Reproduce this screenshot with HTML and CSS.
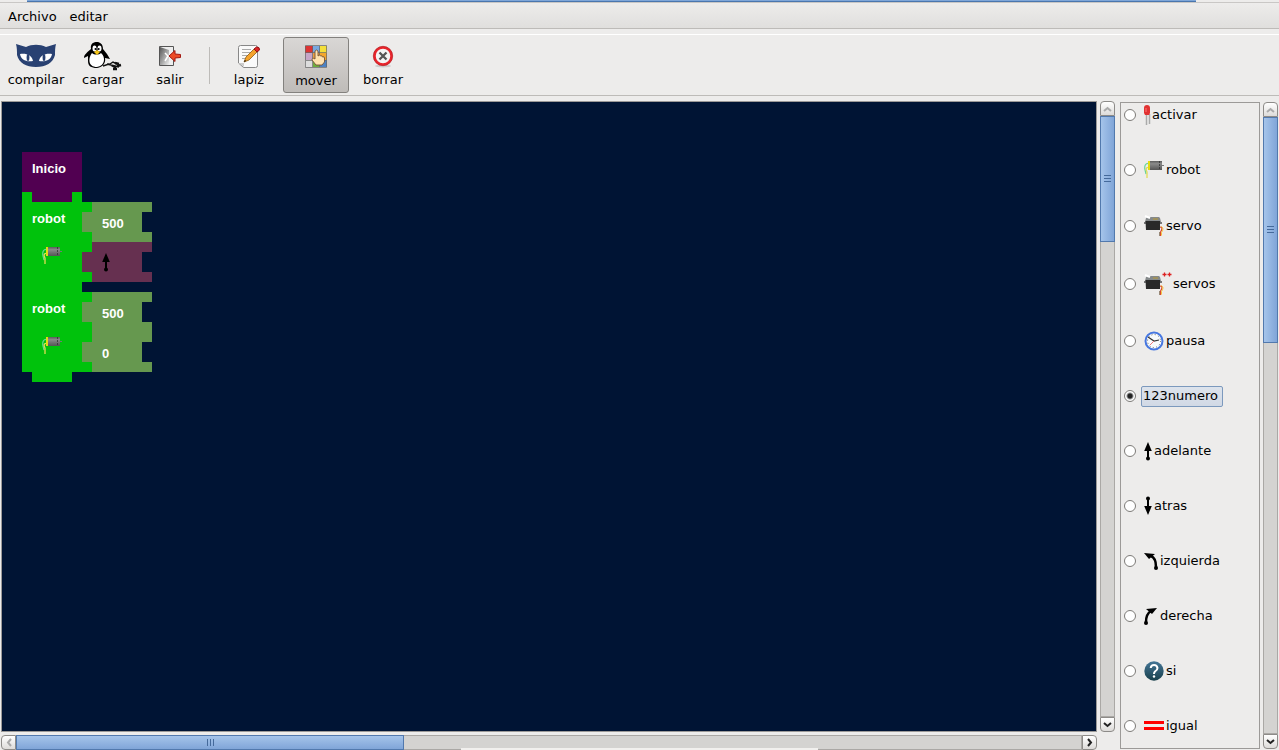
FILE: index.html
```
<!DOCTYPE html>
<html lang="es">
<head>
<meta charset="utf-8">
<title>Editor de bloques</title>
<link rel="stylesheet" href="styles.css">
</head>
<body>
<svg class="defs" aria-hidden="true">
  <defs>
    <linearGradient id="metal" x1="0" y1="0" x2="0" y2="1"><stop offset="0" stop-color="#5c5c5c"/><stop offset=".3" stop-color="#8a8a8a"/><stop offset="1" stop-color="#555"/></linearGradient>
    <linearGradient id="teal" x1="0" y1="0" x2="0" y2="1"><stop offset="0" stop-color="#447596"/><stop offset="1" stop-color="#19404c"/></linearGradient>
    <linearGradient id="door" x1="0" y1="0" x2="1" y2="1"><stop offset="0" stop-color="#555"/><stop offset="1" stop-color="#eee"/></linearGradient>
    <symbol id="motor" viewBox="0 0 20 20">
      <path d="M5 3.500C1 3 .5 6 .8 9L2 14" fill="none" stroke="#68d49a" stroke-width="1.200"/>
      <path d="M5 7.500C1 7 2 10 3 12V18" fill="none" stroke="#e2dc55" stroke-width="1.300"/>
      <rect x="5" y="1" width="13" height="9" fill="url(#metal)"/>
      <rect x="4" y="1" width="2" height="9" fill="#e4dc10"/>
      <path d="M15.500 1V10" stroke="#333" stroke-width=".8" stroke-dasharray="2 1"/>
      <path d="M18 5.500h2" stroke="#777"/>
    </symbol>
    <symbol id="servo" viewBox="0 0 20 22">
      <path d="M2 3l1-1 4 0 2 0 6 0 1 1 1 4H1z" fill="#85898a"/>
      <path d="M1 1l5 2" stroke="#fff" stroke-width="2"/>
      <path d="M9 4h5" stroke="#a9954e" stroke-width="1.500"/>
      <path d="M0 7h18v2H0z" fill="#777"/>
      <path d="M1.500 6h14.500v9H2z" fill="#292929"/>
      <path d="M16 12c3 0 2 3 .5 5v4" fill="none" stroke="#d9492e" stroke-width="1.200"/>
      <path d="M17 11.500c3 1 2 4 .5 6v3" fill="none" stroke="#f3c841" stroke-width="1"/>
      <path d="M15.500 17v4" stroke="#987" stroke-width="1"/>
    </symbol>
    <symbol id="arrow" viewBox="0 0 8 20">
      <path d="M4 1L7.800 10H.2z"/><path d="M3 8h2v9H3z"/><circle cx="4" cy="17.500" r="2"/>
    </symbol>
  </defs>
</svg>
<div class="window-edge"></div>
<nav class="menubar">
  <button class="menu">Archivo</button>
  <button class="menu">editar</button>
</nav>
<div class="toolbar">
  <button class="tool">
    <svg width="40" height="26" viewBox="0 0 40 26"><path d="M0 1L10 4C16 1 24 1 30 4L40 1C39 5 39 8 39 12C37 20 30 24 20 24S3 20 1 12C1 8 1 5 0 1Z" fill="#294172"/><path d="M4 11C10 10 16 12 17 18C10 19 5 17 4 11ZM36 11C30 10 24 12 23 18C30 19 35 17 36 11Z" fill="#fff"/><ellipse cx="12" cy="14.500" rx="1.400" ry="3.500" fill="#294172"/><ellipse cx="28" cy="14.500" rx="1.400" ry="3.500" fill="#294172"/></svg>
    <span>compilar</span>
  </button>
  <button class="tool">
    <svg width="40" height="30" viewBox="0 0 40 30"><path d="M8 8C7 2 11 1 14 1S20 3 20 8L24 13 27 18 22 17C23 22 20 26 14 27C8 27 5 25 5 20V15L1 17C1 13 5 11 8 8Z"/><path d="M9 12C11 14 16 14 18 12C23 16 22 25 14 26C5 26 5 17 9 12Z" fill="#fff"/><ellipse cx="11.500" cy="7.500" rx="2" ry="3" fill="#fff"/><ellipse cx="16.500" cy="7.500" rx="2" ry="3" fill="#fff"/><circle cx="12.500" cy="8" r="1"/><circle cx="15.700" cy="8" r="1"/><path d="M11 11L14 9l3 2-3 3z" fill="#f5c518"/><path d="M20 25L26 23 33 27M24 23L36 26M27 23L30 21 34 23" fill="none" stroke="#111" stroke-width="1.500"/><path d="M32 22l4 1M34 25l4-1M30 28l4 0" stroke="#111" stroke-width="2.500"/></svg>
    <span>cargar</span>
  </button>
  <button class="tool">
    <svg width="24" height="24" viewBox="0 0 24 24"><path d="M1.500 2.500h14v19h-14z" fill="#eee" stroke="#555"/><path d="M2 3L11 6V21H2z" fill="url(#door)"/><path d="M7 9l3 3-3 5" fill="none" stroke="#fff" stroke-width="1.500"/><path d="M11 12L17 6.500V10L22.500 10.500V13.500L17 14V17.500Z" fill="#ed4b26" stroke="#a31912"/></svg>
    <span>salir</span>
  </button>
  <div class="separator"></div>
  <button class="tool">
    <svg width="24" height="26" viewBox="0 0 24 26"><path d="M1.500 4.500Q1.500 2.500 3.500 2.500H18.500Q20.500 2.500 20.500 4.500V22.500Q20.500 24.500 18.500 24.500H6.500L1.500 20Z" fill="#fafafa" stroke="#888"/><path d="M5 6.500h9M5 9.500h9M5 12.500h7M5 15.500h4" stroke="#aaa"/><path d="M2 20l5 4V20z" fill="#ccc"/><path d="M7 19L9 14 17 6 20 9 12 17Z" fill="#f5a32d" stroke="#8c5d16" stroke-width=".8"/><path d="M17 6L19.500 4Q23 4 22.500 7L20 9Z" fill="#dc2727" stroke="#911"/><path d="M7 19l1-2 1 1z"/></svg>
    <span>lapiz</span>
  </button>
  <button class="tool pressed" aria-pressed="true">
    <svg width="24" height="24" viewBox="0 0 24 24"><path d="M1 2h8v7H1z" fill="#d33"/><path d="M9 2h7v7H9z" fill="#78a8df"/><path d="M16 2h7v7h-7z" fill="#f4df3a"/><path d="M1 9h8v7H1z" fill="#c6a5c7"/><path d="M9 9h7v7H9z" fill="#eb9d40"/><path d="M16 9h7v7h-7z" fill="#f4a72b"/><path d="M1 16h8v7H1z" fill="#ddd"/><path d="M9 16h7v7H9z" fill="#6eac3e"/><path d="M16 16h7v7h-7z" fill="#4c82c4"/><path d="M1.500 1.500h21v22h-21zM8.500 2v21M15.500 2v21M2 8.500h20M2 16.500h20" fill="none" stroke="#666" stroke-width=".7"/><path d="M11 15V7Q12.500 5 14 7V12Q16 10 16.500 12Q18 11 18.500 13Q20.500 12 20.500 14V18L18 21H12L8 16Q8 13 11 15Z" fill="#ffe2ae" stroke="#765437" stroke-width=".9"/></svg>
    <span>mover</span>
  </button>
  <button class="tool">
    <svg width="24" height="24" viewBox="0 0 24 24"><ellipse cx="12" cy="22" rx="8" ry="1.500" fill="#ccc"/><circle cx="12" cy="12" r="8.500" fill="#f4f4f4" stroke="#e8252c" stroke-width="2.500"/><circle cx="12" cy="12" r="9.700" fill="none" stroke="#b51e22" stroke-width=".7"/><path d="M8.500 8.500l7 7M15.500 8.500l-7 7" stroke="#555" stroke-width="2.300"/></svg>
    <span>borrar</span>
  </button>
</div>
<main class="main">
  <section class="canvas-area">
    <div class="canvas">
      <svg class="blocks" width="160" height="300" viewBox="0 0 160 300">
        <g shape-rendering="crispEdges">
          <path fill="#00c20c" d="M20 90H80V100H90V110H80V130H90V150H80V170H90V180H80V190H90V200H80V220H90V240H80V260H90V270H70V280H30V270H20Z"/>
          <path fill="#510051" d="M20 50H80V90H70V100H30V90H20Z"/>
          <path fill="#66984f" d="M90 100H150V110H140V130H150V140H90V130H80V110H90ZM90 190H150V200H140V220H150V240H140V260H150V270H90V260H80V240H90V220H80V200H90Z"/>
          <path fill="#663050" d="M90 140H150V150H140V170H150V180H90V170H80V150H90Z"/>
        </g>
        <g class="block-text">
          <text x="30" y="71">Inicio</text><text x="30" y="121">robot</text><text x="100" y="126">500</text>
          <text x="30" y="211">robot</text><text x="100" y="216">500</text><text x="100" y="256">0</text>
        </g>
        <use href="#motor" x="40" y="144" width="20" height="20"/>
        <use href="#motor" x="40" y="234" width="20" height="20"/>
        <use href="#arrow" x="100" y="150" width="8" height="20"/>
      </svg>
    </div>
    <div class="scroll vertical">
      <button class="step" aria-label="Subir" disabled><svg width="9" height="6" viewBox="0 0 9 6"><path d="M1 5l3.500-3L8 5"/></svg></button>
      <div class="track"><div class="thumb" style="height:20.900%"><i class="grip"></i></div></div>
      <button class="step" aria-label="Bajar"><svg width="9" height="6" viewBox="0 0 9 6"><path d="M1 1l3.500 3L8 1"/></svg></button>
    </div>
    <div class="scroll horizontal">
      <button class="step" aria-label="Izquierda" disabled><svg width="6" height="9" viewBox="0 0 6 9"><path d="M5 1L2 4.500 5 8"/></svg></button>
      <div class="track"><div class="thumb" style="width:36.400%"><i class="grip"></i></div></div>
      <button class="step" aria-label="Derecha"><svg width="6" height="9" viewBox="0 0 6 9"><path d="M1 1l3 3.500L1 8"/></svg></button>
      <div class="bottom-sheet"></div>
    </div>
  </section>
  <aside class="palette">
    <div class="list">
      <label class="item"><input type="radio" name="block"><span><svg width="8" height="22" viewBox="0 0 8 22"><path d="M2.500 10v11M5.500 10v10" stroke="#aaa" stroke-width="1.500"/><path d="M0 9V4Q0 1 3 1T6 4V9L5 11H1Z" fill="#e13232"/><path d="M2 4v4" stroke="#f77"/></svg>activar</span></label>
      <label class="item"><input type="radio" name="block"><span><svg width="22" height="20"><use href="#motor" width="20" height="20"/></svg>robot</span></label>
      <label class="item tall"><input type="radio" name="block"><span><svg width="22" height="22"><use href="#servo" width="20" height="22"/></svg>servo</span></label>
      <label class="item taller"><input type="radio" name="block"><span><svg width="29" height="26" viewBox="0 0 29 26"><use href="#servo" y="3" width="20" height="22"/><path d="M18.500 3.500h4M20.500 1.500v4M23.500 3.500h4M25.500 1.500v4" stroke="#d22" stroke-width="1.300"/></svg>servos</span></label>
      <label class="item"><input type="radio" name="block"><span><svg width="22" height="20" viewBox="0 0 22 20"><circle cx="10" cy="10" r="8.500" fill="#f8fafc" stroke="#4777e0" stroke-width="2"/><circle cx="10" cy="10" r="6.500" fill="none" stroke="#666" stroke-width="1" stroke-dasharray="1 2.400"/><path d="M4 6l6 4 5-1" fill="none" stroke="#333" stroke-width="1.200"/><path d="M10 10l-4 4" stroke="#e77" stroke-width="1"/></svg>pausa</span></label>
      <label class="item"><input type="radio" name="block" checked><span>123numero</span></label>
      <label class="item"><input type="radio" name="block"><span><svg width="10" height="20"><use href="#arrow" width="8" height="20"/></svg>adelante</span></label>
      <label class="item"><input type="radio" name="block"><span><svg width="10" height="20" viewBox="0 0 10 20"><use href="#arrow" transform="rotate(180 4 10)" width="8" height="20"/></svg>atras</span></label>
      <label class="item"><input type="radio" name="block"><span><svg width="16" height="20" viewBox="0 0 16 20"><path d="M0 2L11 3 5 8Z"/><path d="M7 5Q12 7 12 16" fill="none" stroke="#000" stroke-width="2.500"/><circle cx="12" cy="17" r="2"/></svg>izquierda</span></label>
      <label class="item"><input type="radio" name="block"><span><svg width="16" height="20" viewBox="0 0 16 20"><path d="M13 2L2 3 8 8Z"/><path d="M7 5Q2 8 2 16" fill="none" stroke="#000" stroke-width="2.500"/><circle cx="2" cy="17" r="2"/></svg>derecha</span></label>
      <label class="item"><input type="radio" name="block"><span><svg width="22" height="20" viewBox="0 0 22 20"><circle cx="10" cy="10" r="9.700" fill="url(#teal)"/><path d="M6.700 7Q7 4 10 4T13.500 7Q13.500 9 11 10.500Q10 11.500 10 13" fill="none" stroke="#fff" stroke-width="2"/><circle cx="10" cy="15.500" r="1.200" fill="#fff"/></svg>si</span></label>
      <label class="item"><input type="radio" name="block"><span><svg width="22" height="20" viewBox="0 0 22 20"><path d="M0 6.500h20M0 12.500h20" stroke="#f00" stroke-width="3"/></svg>igual</span></label>
    </div>
    <div class="scroll vertical">
      <button class="step" aria-label="Subir" disabled><svg width="9" height="6" viewBox="0 0 9 6"><path d="M1 5l3.500-3L8 5"/></svg></button>
      <div class="track"><div class="thumb" style="height:36.600%"><i class="grip"></i></div></div>
      <button class="step" aria-label="Bajar"><svg width="9" height="6" viewBox="0 0 9 6"><path d="M1 1l3.500 3L8 1"/></svg></button>
    </div>
  </aside>
</main>
</body>
</html>
```

FILE: styles.css
```
* { box-sizing: border-box; }
body {
  margin: 0;
  height: 100vh;
  display: flex;
  flex-direction: column;
  overflow: hidden;
  background: #edeceb;
  color: #000;
  font: 13px/16px "DejaVu Sans", sans-serif;
}
button { font: inherit; color: inherit; padding: 0; border: 0; background: none; }
svg { display: block; flex: none; }
.defs { position: absolute; width: 0; height: 0; }

.window-edge {
  flex: none;
  height: 2px;
  margin: 0 83px 0 27px;
  background: #7ea6d8;
  border-bottom: 1px solid #4a76ae;
}
.menubar {
  flex: none;
  display: flex;
  gap: 13px;
  height: 27px;
  padding: 2px 8px 0;
  border-top: 1px solid #c9c7c5;
  border-bottom: 1px solid #bdbbb8;
  background: linear-gradient(#edeceb, #e0dfdd);
}
.toolbar {
  flex: none;
  display: flex;
  gap: 1px;
  margin-top: 5px;
  padding: 2px 3px;
  height: 62px;
  border-top: 1px solid #fff;
  border-bottom: 1px solid #bdbbb8;
}
.tool {
  width: 66px;
  height: 56px;
  display: flex;
  flex-direction: column;
  align-items: center;
  justify-content: space-between;
  padding: 4px 0 5px;
}
.tool svg { height: 30px; }
.pressed {
  border: 1px solid #83817e;
  border-radius: 3px;
  background: linear-gradient(#d9d7d5, #bfbcb9);
  padding: 3px 0;
}
.separator { width: 1px; margin: 10px 5px 9px; background: #bdbbb8; }

.main {
  flex: 1;
  min-height: 0;
  display: flex;
  gap: 5px;
  padding: 5px 1px 0;
}
.canvas-area {
  flex: 1;
  min-width: 0;
  display: grid;
  grid-template-columns: minmax(0, 1fr) 15px;
  grid-template-rows: minmax(0, 1fr) 15px;
  gap: 3px;
}
.canvas {
  border: 1px solid #9c9a98;
  background: #001434;
  overflow: hidden;
}
.block-text {
  fill: #fff;
  font: bold 13px "Liberation Sans", Arial, sans-serif;
}
.palette {
  flex: none;
  display: flex;
  gap: 3px;
  padding: 1px 0;
}
.list {
  width: 140px;
  display: flex;
  flex-direction: column;
  gap: 33px;
  padding-top: 1px;
  border: 1px solid #9c9a98;
  overflow: hidden;
}
.item {
  flex: none;
  display: flex;
  align-items: center;
  gap: 5px;
  height: 22px;
  padding-left: 3px;
}
.tall { height: 24px; }
.taller { height: 26px; }
.item input {
  appearance: none;
  flex: none;
  width: 12px;
  height: 12px;
  margin: 0;
  border: 1px solid #7d7b78;
  border-radius: 50%;
  background: #fff;
}
.item input:checked { background: radial-gradient(circle, #222 0 2px, #fff 4px); }
.item span {
  display: flex;
  align-items: center;
  padding: 0 3px;
}
.item input:checked + span {
  height: 21px;
  padding: 0 4px 0 1px;
  border: 1px solid #7c99bd;
  border-radius: 2px;
  background: linear-gradient(#dde3ec, #d1d9e5);
}

.scroll { display: flex; position: relative; }
.vertical { flex-direction: column; width: 15px; }
.step {
  flex: none;
  width: 15px;
  height: 15px;
  display: grid;
  place-items: center;
  border: 1px solid #8d8b88;
  background: linear-gradient(#fff, #dddbd9);
}
.vertical .step:first-child { border-radius: 4px 4px 0 0; }
.vertical .step:last-child { border-radius: 0 0 4px 4px; }
.horizontal .step:first-child { border-radius: 4px 0 0 4px; }
.horizontal .step:last-of-type { border-radius: 0 4px 4px 0; }
.step path { fill: none; stroke: #222; stroke-width: 2; }
.step:disabled path { stroke: #aaa; }
.track {
  flex: 1;
  min-width: 0;
  min-height: 0;
  display: flex;
  background: #d4d3d1;
  box-shadow: inset 0 0 0 1px #aaa8a5;
}
.thumb {
  display: grid;
  place-items: center;
  border: 1px solid #5279ad;
}
.vertical .thumb { width: 15px; background: linear-gradient(90deg, #a5c4ea, #80a5d8); }
.horizontal .thumb { background: linear-gradient(#a5c4ea, #80a5d8); }
.grip { width: 7px; height: 7px; }
.vertical .grip { background: repeating-linear-gradient(#456a9b 0 1px, transparent 1px 3px); }
.horizontal .grip { background: repeating-linear-gradient(90deg, #456a9b 0 1px, transparent 1px 3px); }
.bottom-sheet {
  position: absolute;
  left: 42%;
  right: 25.500%;
  bottom: 0;
  height: 2px;
  background: #f1f0ee;
}
```
